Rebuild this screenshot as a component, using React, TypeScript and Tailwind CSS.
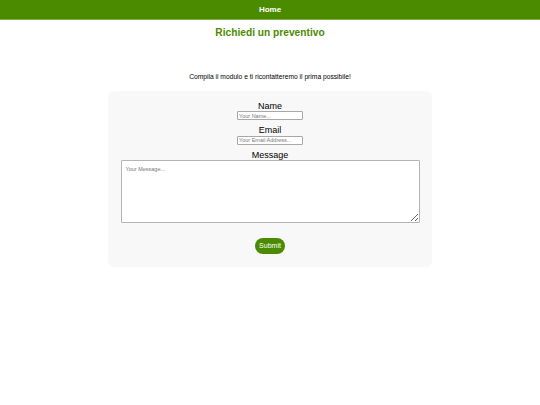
export default function App() {
  return (
    <div className="min-h-[405px] bg-white font-['Liberation_Sans',Arial,sans-serif] text-black">
      <nav className="flex h-[20px] items-center justify-center bg-[#4b8b00] border-b border-[#7fb04a]">
        <a className="pt-[1px] text-[8px] font-bold leading-none text-white">Home</a>
      </nav>

      <h1 className="mt-[6px] text-center text-[10.2px] font-bold leading-[14px] text-[#4b8b00]">
        Richiedi un preventivo
      </h1>

      <p className="mt-[33px] text-center text-[6.7px] leading-[8px]">
        Compila il modulo e ti ricontatteremo il prima possibile!
      </p>

      <form className="mx-auto mt-[10px] flex w-[324px] flex-col items-center rounded-[6px] bg-[#f8f8f8] pt-[10px] pb-[13px]">
        <label className="text-[9px] leading-[10px]">Name</label>
        <input
          placeholder="Your Name..."
          className="h-[9px] w-[66px] rounded-[1px] border border-[#a8a8a8] bg-white px-[1px] text-[5.5px] placeholder:text-[#777]"
        />

        <label className="mt-[5px] text-[9px] leading-[10px]">Email</label>
        <input
          placeholder="Your Email Address..."
          className="mt-[1px] h-[8.5px] w-[66px] rounded-[1px] border border-[#a8a8a8] bg-white px-[1px] text-[5.5px] placeholder:text-[#777]"
        />

        <label className="mt-[5px] text-[9px] leading-[10px]">Message</label>
        <textarea
          placeholder="Your Message..."
          className="h-[63px] w-[299px] rounded-[1px] border border-[#b4b4b4] bg-white px-[4px] py-[4px] text-[5.5px] placeholder:text-[#777]"
        />

        <button
          type="button"
          className="mt-[15px] h-[16px] w-[30px] rounded-full bg-[#4b8b00] text-[7px] leading-none text-white"
        >
          Submit
        </button>
      </form>
    </div>
  );
}
